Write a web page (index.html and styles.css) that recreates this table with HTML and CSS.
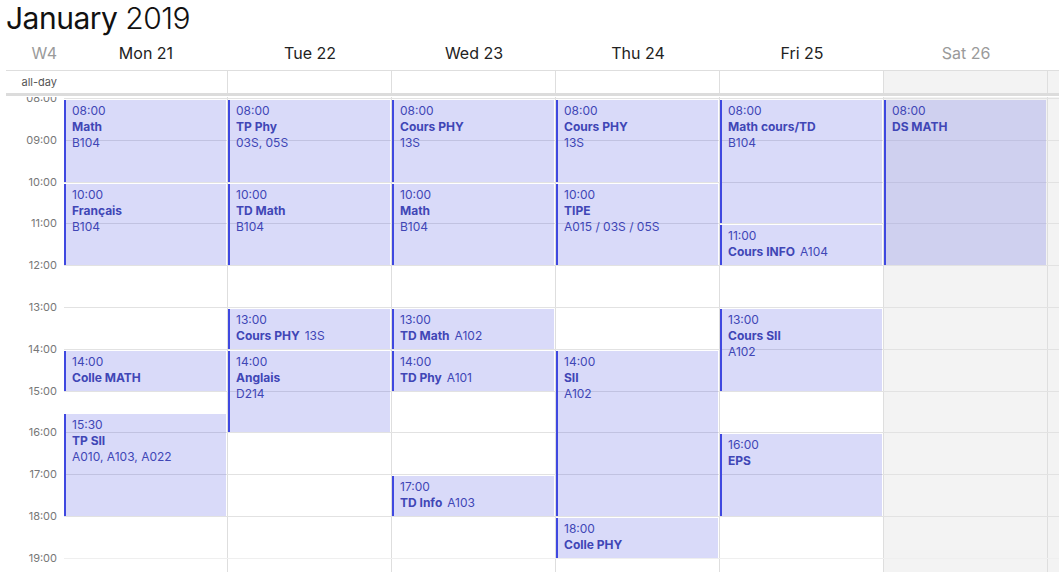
FILE: index.html
```html
<!DOCTYPE html>
<html lang="fr">
<head>
<meta charset="utf-8">
<title>January 2019</title>
<link rel="stylesheet" href="styles.css">
</head>
<body>
<div class="title"><span class="month">January</span> <span class="year">2019</span></div>
<div class="cal">
  <div class="head">
    <div class="axis wk">W4</div>
    <div class="dh">Mon 21</div>
    <div class="dh">Tue 22</div>
    <div class="dh">Wed 23</div>
    <div class="dh">Thu 24</div>
    <div class="dh">Fri 25</div>
    <div class="dh off">Sat 26</div>
    <div class="dh off"></div>
  </div>
  <div class="allday">
    <div class="axis adlabel">all-day</div>
    <div class="ad"></div>
    <div class="ad"></div>
    <div class="ad"></div>
    <div class="ad"></div>
    <div class="ad"></div>
    <div class="ad wkend"></div>
    <div class="ad wkend"></div>
  </div>
  <div class="divider"></div>
  <div class="tg">
    <div class="bg">
      <div></div>
      <div class="bgcol"></div>
      <div class="bgcol"></div>
      <div class="bgcol"></div>
      <div class="bgcol"></div>
      <div class="bgcol"></div>
      <div class="bgcol wkend"></div>
      <div class="bgcol wkend"></div>
    </div>
    <div class="slots">
      <div class="slot"><div class="sl">08:00</div><div class="lane"></div></div>
      <div class="slot"><div class="sl">09:00</div><div class="lane"></div></div>
      <div class="slot"><div class="sl">10:00</div><div class="lane"></div></div>
      <div class="slot"><div class="sl">11:00</div><div class="lane"></div></div>
      <div class="slot"><div class="sl">12:00</div><div class="lane"></div></div>
      <div class="slot"><div class="sl">13:00</div><div class="lane"></div></div>
      <div class="slot"><div class="sl">14:00</div><div class="lane"></div></div>
      <div class="slot"><div class="sl">15:00</div><div class="lane"></div></div>
      <div class="slot"><div class="sl">16:00</div><div class="lane"></div></div>
      <div class="slot"><div class="sl">17:00</div><div class="lane"></div></div>
      <div class="slot"><div class="sl">18:00</div><div class="lane"></div></div>
      <div class="slot"><div class="sl">19:00</div><div class="lane light"></div></div>
    </div>
    <div class="content">
      <div></div>
      <div class="col">
        <div class="ev" style="--s:0;--d:2"><div class="t">08:00</div><div class="n">Math</div><div class="l">B104</div></div>
        <div class="ev" style="--s:2;--d:2"><div class="t">10:00</div><div class="n">Français</div><div class="l">B104</div></div>
        <div class="ev" style="--s:6;--d:1"><div class="t">14:00</div><div class="n">Colle MATH</div></div>
        <div class="ev" style="--s:7.5;--d:2.5"><div class="t">15:30</div><div class="n">TP SII</div><div class="l">A010, A103, A022</div></div>
      </div>
      <div class="col">
        <div class="ev" style="--s:0;--d:2"><div class="t">08:00</div><div class="n">TP Phy</div><div class="l">03S, 05S</div></div>
        <div class="ev" style="--s:2;--d:2"><div class="t">10:00</div><div class="n">TD Math</div><div class="l">B104</div></div>
        <div class="ev" style="--s:5;--d:1"><div class="t">13:00</div><div class="n">Cours PHY<span class="li">13S</span></div></div>
        <div class="ev" style="--s:6;--d:2"><div class="t">14:00</div><div class="n">Anglais</div><div class="l">D214</div></div>
      </div>
      <div class="col">
        <div class="ev" style="--s:0;--d:2"><div class="t">08:00</div><div class="n">Cours PHY</div><div class="l">13S</div></div>
        <div class="ev" style="--s:2;--d:2"><div class="t">10:00</div><div class="n">Math</div><div class="l">B104</div></div>
        <div class="ev" style="--s:5;--d:1"><div class="t">13:00</div><div class="n">TD Math<span class="li">A102</span></div></div>
        <div class="ev" style="--s:6;--d:1"><div class="t">14:00</div><div class="n">TD Phy<span class="li">A101</span></div></div>
        <div class="ev" style="--s:9;--d:1"><div class="t">17:00</div><div class="n">TD Info<span class="li">A103</span></div></div>
      </div>
      <div class="col">
        <div class="ev" style="--s:0;--d:2"><div class="t">08:00</div><div class="n">Cours PHY</div><div class="l">13S</div></div>
        <div class="ev" style="--s:2;--d:2"><div class="t">10:00</div><div class="n">TIPE</div><div class="l">A015 / 03S / 05S</div></div>
        <div class="ev" style="--s:6;--d:4"><div class="t">14:00</div><div class="n">SII</div><div class="l">A102</div></div>
        <div class="ev" style="--s:10;--d:1"><div class="t">18:00</div><div class="n">Colle PHY</div></div>
      </div>
      <div class="col">
        <div class="ev" style="--s:0;--d:3"><div class="t">08:00</div><div class="n">Math cours/TD</div><div class="l">B104</div></div>
        <div class="ev" style="--s:3;--d:1"><div class="t">11:00</div><div class="n">Cours INFO<span class="li">A104</span></div></div>
        <div class="ev" style="--s:5;--d:2"><div class="t">13:00</div><div class="n">Cours SII</div><div class="l">A102</div></div>
        <div class="ev" style="--s:8;--d:2"><div class="t">16:00</div><div class="n">EPS</div></div>
      </div>
      <div class="col">
        <div class="ev" style="--s:0;--d:4"><div class="t">08:00</div><div class="n">DS MATH</div></div>
      </div>
      <div class="col"></div>
    </div>
  </div>
</div>
</body>
</html>
```
FILE: styles.css
```css
html, body {
  margin: 0;
  padding: 0;
  background: #fff;
  overflow: hidden;
}
body {
  font-family: Inter, "Noto Sans", "Liberation Sans", sans-serif;
  color: #222;
  width: 1059px;
  height: 572px;
}
.title {
  height: 36px;
  line-height: 36px;
  font-size: 30px;
  padding-left: 6px;
  color: #111;
  white-space: nowrap;
  letter-spacing: -0.5px;
}
.month { font-weight: 400; }
.year { font-weight: 300; }

.cal {
  margin-left: 6px;
  width: 1206px;
}
.head, .allday, .bg, .content {
  display: grid;
  grid-template-columns: 58px repeat(7, 164px);
}
.head {
  height: 34px;
  align-items: center;
  border-bottom: 1px solid #dedede;
}
.axis {
  text-align: right;
  padding-right: 7px;
}
.wk {
  font-size: 16px;
  color: #9a9a9a;
}
.dh {
  text-align: center;
  font-size: 16px;
  color: #222;
}
.dh.off { color: #9a9a9a; }

.allday { height: 22px; }
.adlabel {
  font-size: 11px;
  line-height: 22px;
  color: #555;
}
.ad { border-right: 1px solid #dedede; }
.wkend { background: #f3f3f3; }

.divider {
  height: 3px;
  background: #dcdcdc;
}

.tg {
  position: relative;
  margin-top: 1px;
  height: 475px;
  overflow: hidden;
}
.bg, .content {
  position: absolute;
  top: 0;
  left: 0;
  bottom: 0;
  width: 1206px;
}
.bg { z-index: 0; }
.bgcol { border-right: 1px solid #dedede; }

.slots {
  position: relative;
  z-index: 1;
  padding-top: 1px;
}
.slot {
  display: grid;
  grid-template-columns: 58px 1fr;
  height: 41.8px;
}
.sl {
  font-size: 11px;
  line-height: 14px;
  margin-top: -7px;
  text-align: right;
  padding-right: 7px;
  color: #777;
}
.lane { border-top: 1px solid #e2e2e2; }
.lane.light { border-top-color: #efefef; }

.content { z-index: 2; }
.col { position: relative; }
.ev {
  position: absolute;
  left: 0;
  right: 2px;
  top: calc(3px + var(--s) * 41.8px);
  height: calc(var(--d) * 41.8px - 2px);
  box-sizing: border-box;
  background: rgba(63, 72, 224, 0.2);
  border-left: 2px solid #3f48e0;
  padding: 3px 6px;
  font-size: 12px;
  line-height: 16px;
  color: #4046b6;
  overflow: hidden;
  white-space: nowrap;
}
.n { font-weight: 700; }
.li {
  font-weight: 400;
  margin-left: 5px;
}
```
